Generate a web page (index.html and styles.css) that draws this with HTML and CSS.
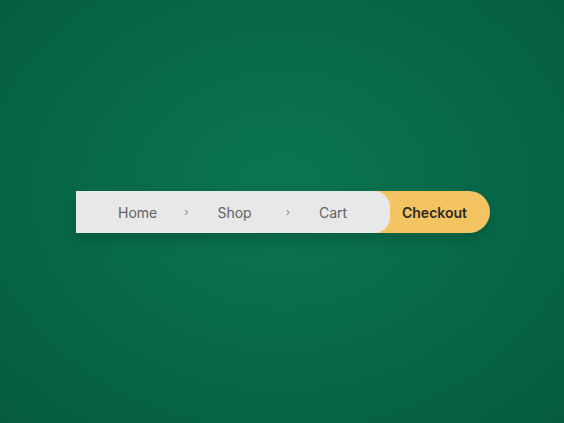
FILE: index.html
```html
<!DOCTYPE html>
<html lang="en">
<head>
<meta charset="utf-8">
<title>Breadcrumb</title>
<link rel="stylesheet" href="styles.css">
</head>
<body>
<main class="stage">
  <nav class="breadcrumb" aria-label="Breadcrumb">
    <ol class="crumbs">
      <li class="crumb">Home</li>
      <li class="sep" aria-hidden="true">›</li>
      <li class="crumb">Shop</li>
      <li class="sep" aria-hidden="true">›</li>
      <li class="crumb">Cart</li>
    </ol>
    <a class="checkout" href="#">Checkout</a>
  </nav>
</main>
</body>
</html>
```

FILE: styles.css
```css
html, body {
  margin: 0;
  height: 100%;
}

body {
  background: radial-gradient(ellipse 75% 80% at 50% 45%, #0b7553 0%, #086a4a 45%, #055a3e 100%);
  font-family: "Inter", "Open Sans", "Liberation Sans", sans-serif;
}

.stage {
  height: 100%;
  display: flex;
  align-items: center;
  justify-content: center;
  padding-left: 2px;
  box-sizing: border-box;
}

.breadcrumb {
  display: flex;
  height: 42px;
  width: 414px;
  border-radius: 0 21px 21px 0;
  box-shadow: 0 6px 14px rgba(0, 30, 15, 0.22);
  margin-top: 1px;
}

.crumbs {
  position: relative;
  z-index: 1;
  display: flex;
  align-items: center;
  gap: 29px;
  margin: 0;
  padding: 0 0 0 42px;
  list-style: none;
  width: 314px;
  box-sizing: border-box;
  background: #e8e8e8;
  border-radius: 0 16px 16px 0;
}

.crumb {
  font-size: 14px;
  color: #626262;
}

.crumb:nth-child(1) {
  margin-right: -2px;
}

.crumb:nth-child(3) {
  margin-right: 5px;
}

.sep {
  font-size: 11px;
  color: #8a8a8a;
}

.checkout {
  flex: 1;
  display: flex;
  align-items: center;
  justify-content: flex-end;
  margin-left: -20px;
  padding: 0 23px 0 20px;
  background: #f4c362;
  border-radius: 0 21px 21px 0;
  color: #2a2a22;
  font-size: 14px;
  font-weight: 600;
  text-decoration: none;
}
```
